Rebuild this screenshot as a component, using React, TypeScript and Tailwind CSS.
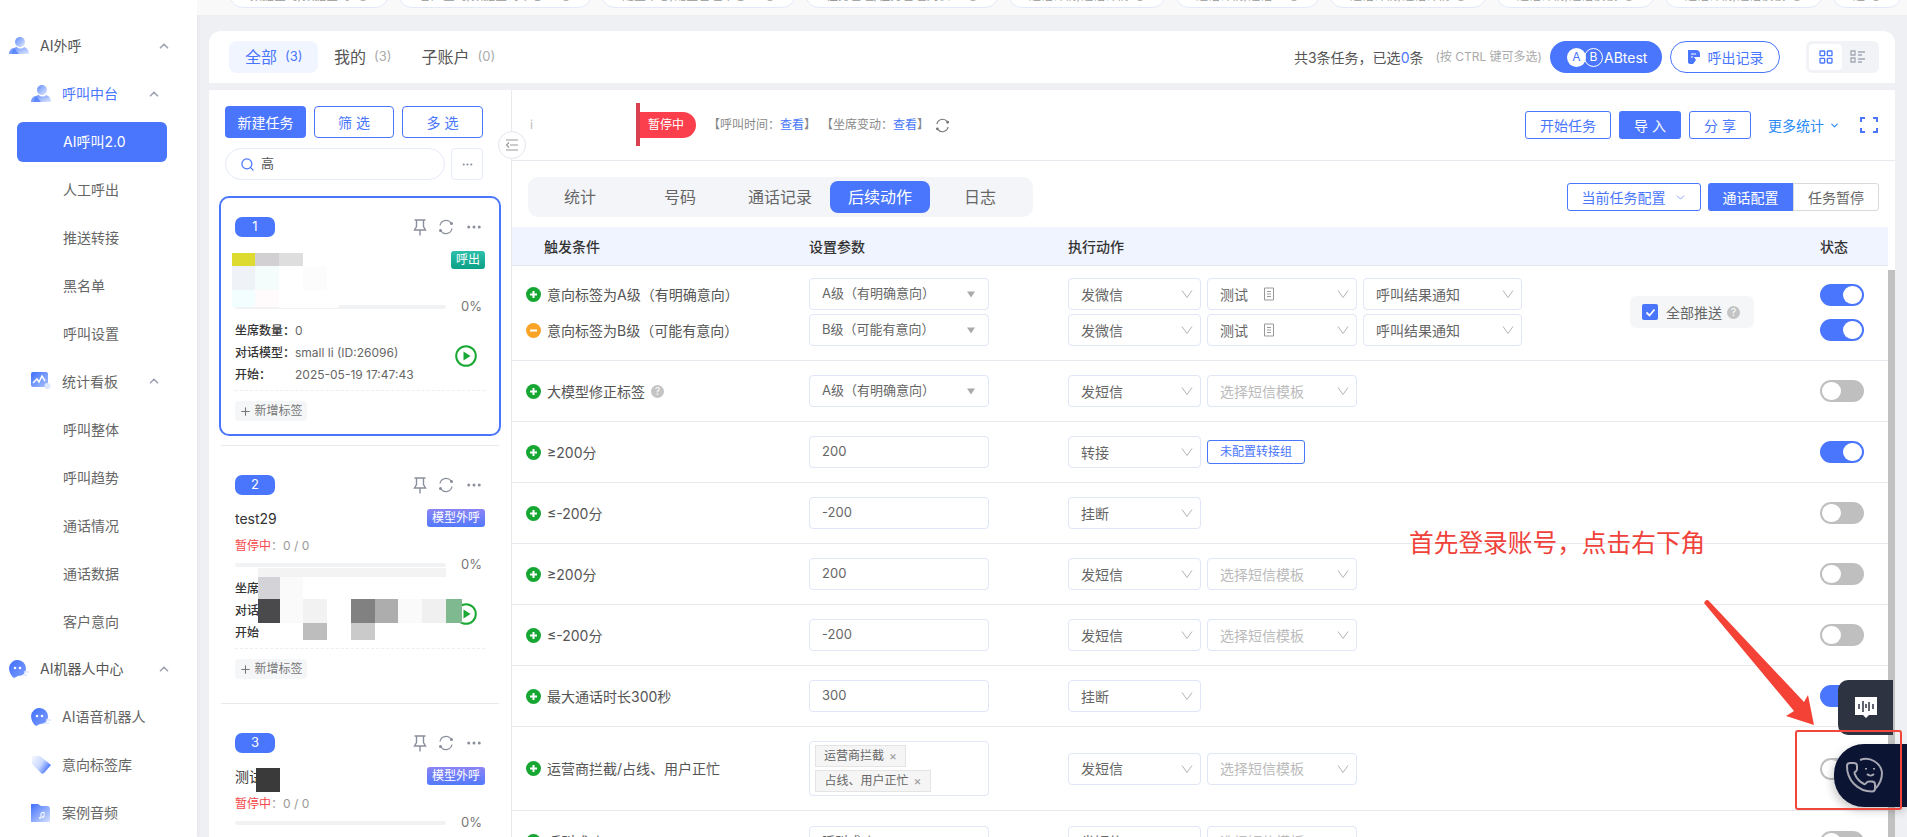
import React from 'react';
import { ChevronDown, ChevronUp, Ellipsis, LayoutGrid, Plus, Search } from 'lucide-react';

const PILLS = [
  { w: 'w-[160px]', text: '数据查询/数据查询' },
  { w: 'w-[194px]', text: '客户查询/数据查询中心' },
  { w: 'w-[195px]', text: '配置中心/配置管理中心' },
  { w: 'w-[194px]', text: '任务管理/任务管理列表' },
  { w: 'w-[158px]', text: '通话详情/通话详情' },
  { w: 'w-[145px]', text: '通话详情/通话记录' },
  { w: 'w-[158px]', text: '通话详情/通话详情' },
  { w: 'w-[159px]', text: '通话详情/通话模板' },
  { w: 'w-[159px]', text: '通话详情/通话模板' },
  { w: 'w-[70px]', text: '通话详情' },
];

const PeopleIcon = ({ id }: { id: string }) => (
  <svg width="20" height="18" viewBox="0 0 20 18" className="shrink-0">
    <defs>
      <linearGradient id={id} x1="0" y1="0" x2="1" y2="1">
        <stop offset="0" stopColor="#5f8afc" />
        <stop offset="1" stopColor="#e2eafe" />
      </linearGradient>
    </defs>
    <circle cx="11" cy="5" r="5" fill={`url(#${id})`} />
    <path d="M3 17c0-4 2-7 5-7 1 2 6 2 7 0 3 1 5 3 5 7z" fill={`url(#${id})`} />
    <path d="M0 17c0-3 2-6 5-6l5 6z" fill="#4b7bfb" opacity=".75" />
  </svg>
);

const ChartIcon = () => (
  <svg width="20" height="18" viewBox="0 0 20 18" className="shrink-0">
    <defs>
      <linearGradient id="chartg" x1="0" y1="0" x2="1" y2="1">
        <stop offset="0" stopColor="#3f6ffb" />
        <stop offset="1" stopColor="#a9c2fd" />
      </linearGradient>
    </defs>
    <rect width="17" height="15" rx="2" fill="url(#chartg)" />
    <path d="M2 11l4-4 2 3 3-6 3 5" fill="none" stroke="#fff" strokeWidth="1.5" />
    <circle cx="16.5" cy="14" r="3" fill="#dbe6ff" />
  </svg>
);

const BotIcon = ({ id }: { id: string }) => (
  <svg width="20" height="18" viewBox="0 0 20 18" className="shrink-0">
    <defs>
      <linearGradient id={id} x1="0" y1="0" x2="1" y2="1">
        <stop offset="0" stopColor="#3f6ffb" />
        <stop offset="1" stopColor="#7f9ffd" />
      </linearGradient>
    </defs>
    <path d="M9 0a8.500 8.500 0 0 1 8 8c0 5-3 8-8 8l-4 2c-3-2-5-6-5-10a8.500 8.500 0 0 1 9-8z" fill={`url(#${id})`} />
    <circle cx="6" cy="8" r="1.300" fill="#fff" />
    <circle cx="11" cy="8" r="1.300" fill="#fff" />
    <path d="M15 12h5M14 15h4" stroke="#dbe6ff" strokeWidth="1.500" />
  </svg>
);

const TagIcon = () => (
  <svg width="20" height="18" viewBox="0 0 20 18" className="shrink-0">
    <defs>
      <linearGradient id="tagg" x1="0" y1="0" x2="1" y2="0.6">
        <stop offset="0" stopColor="#f6f8ff" />
        <stop offset="0.55" stopColor="#c9d8fe" />
        <stop offset="1" stopColor="#3f6ffb" />
      </linearGradient>
    </defs>
    <path d="M1 2c0-1 1-2 2-2h6l11 9-7 8c-1 1-2 1-3 0L1 8z" fill="url(#tagg)" />
  </svg>
);

const FolderIcon = () => (
  <svg width="20" height="18" viewBox="0 0 20 18" className="shrink-0">
    <defs>
      <linearGradient id="folderg" x1="0" y1="0" x2="1" y2="1">
        <stop offset="0" stopColor="#3f6ffb" />
        <stop offset="1" stopColor="#d5e1fd" />
      </linearGradient>
    </defs>
    <path d="M0 0h7l3 2h6c2 0 3 1 3 3v13H0z" fill="url(#folderg)" />
    <path d="M10 9v5M10 9l3-1v5" stroke="#fff" strokeWidth="1" fill="none" />
    <circle cx="9" cy="14" r="1" fill="#fff" />
    <circle cx="12" cy="13" r="1" fill="#fff" />
  </svg>
);

const SyncIcon = ({ size, className }: { size: number; className?: string }) => (
  <svg width={size} height={size} viewBox="0 0 16 16" fill="none" stroke="currentColor" strokeWidth="1.200" className={className}>
    <path d="M2 6.500A6.200 6.200 0 0 1 13 3.800" />
    <path d="M14 9.500A6.200 6.200 0 0 1 3 12.200" />
    <circle cx="13.500" cy="4.500" r=".9" fill="currentColor" />
    <circle cx="2.500" cy="11.500" r=".9" fill="currentColor" />
  </svg>
);

const PinIcon = () => (
  <svg width="14" height="17" viewBox="0 0 14 17" fill="none" stroke="currentColor" strokeWidth="1.400">
    <path d="M1.500 1h11M3.500 1v6.500L1.500 11h11l-2-3.500V1M7 11v5.500" />
  </svg>
);

const Sidebar = () => {
  const Sub = ({ text }: { text: string }) => (
    <div className="flex h-12 items-center pl-[63px] text-[14px] text-[#666]">{text}</div>
  );
  const Up = ({ pr }: { pr: string }) => (
    <ChevronUp size={14} strokeWidth={3} className={`ml-auto text-[#a2a6b4] ${pr}`} />
  );
  return (
    <aside className="flex h-full w-[197px] shrink-0 flex-col overflow-hidden bg-white pt-[22px] shadow-[2px_0_4px_rgba(0,0,0,0.03)]">
      <div className="flex h-12 items-center gap-[11px] pl-[9px] text-[14px] text-[#555]">
        <PeopleIcon id="p1" />
        AI外呼
        <Up pr="mr-[26px]" />
      </div>
      <div className="flex h-12 items-center gap-[11px] pl-[31px] text-[14px] text-[#4a76fd]">
        <PeopleIcon id="p2" />
        呼叫中台
        <Up pr="mr-[36px]" />
      </div>
      <div className="flex h-12 items-center px-[17px]">
        <div className="flex h-10 w-[150px] items-center rounded-md bg-[#4a76fd] pl-[46px] text-[14px] text-white">
          AI呼叫2.0
        </div>
      </div>
      <Sub text="人工呼出" />
      <Sub text="推送转接" />
      <Sub text="黑名单" />
      <Sub text="呼叫设置" />
      <div className="flex h-12 items-center gap-[11px] pl-[31px] text-[14px] text-[#666]">
        <ChartIcon />
        统计看板
        <Up pr="mr-[36px]" />
      </div>
      <Sub text="呼叫整体" />
      <Sub text="呼叫趋势" />
      <Sub text="通话情况" />
      <Sub text="通话数据" />
      <Sub text="客户意向" />
      <div className="flex h-12 items-center gap-[11px] pl-[9px] text-[14px] text-[#555]">
        <BotIcon id="b1" />
        AI机器人中心
        <Up pr="mr-[26px]" />
      </div>
      <div className="flex h-12 shrink-0 items-center gap-[11px] pl-[31px] text-[14px] text-[#666]">
        <BotIcon id="b2" />
        AI语音机器人
      </div>
      <div className="flex h-12 shrink-0 items-center gap-[11px] pl-[31px] text-[14px] text-[#666]">
        <TagIcon />
        意向标签库
      </div>
      <div className="flex h-12 shrink-0 items-center gap-[11px] pl-[31px] text-[14px] text-[#666]">
        <FolderIcon />
        案例音频
      </div>
    </aside>
  );
};

const PlayIcon = () => (
  <svg width="22" height="22" viewBox="0 0 22 22" className="absolute left-[234px] top-[147px]">
    <circle cx="11" cy="11" r="9.800" fill="#fff" stroke="#1aa834" strokeWidth="2" />
    <path d="M8.500 6.500v9l7-4.500z" fill="#1aa834" />
  </svg>
);

interface CardProps {
  index: number;
  name?: React.ReactNode;
  tag: 'out' | 'model';
  paused?: boolean;
  info?: [string, string][];
  active?: boolean;
  children?: React.ReactNode;
}

const TaskCard = ({ index, name, tag, paused, info, active, children }: CardProps) => (
  <div
    className={`relative h-[240px] shrink-0 rounded-[10px] border-2 px-[14px] pt-[19px] ${
      active ? 'border-[#4a76fd]' : 'border-transparent'
    }`}
  >
    <div className="flex h-5 items-center">
      <div className="flex h-5 w-10 items-center justify-center rounded-[7px] bg-[#4a76fd] text-[13px] text-white">
        {index}
      </div>
      <div className="ml-auto flex items-center gap-[11px] pr-[2px] text-[#8a8f9c]">
        <PinIcon />
        <SyncIcon size={16} />
        <Ellipsis size={18} strokeWidth={2} />
      </div>
    </div>
    <div className="mt-[14px] flex h-[18px] items-center justify-between">
      <span className="text-[14px] text-[#333]">{name}</span>
      {tag === 'out' ? (
        <span className="flex h-[18px] w-[34px] items-center justify-center rounded-[3px] bg-gradient-to-b from-[#2cc0ab] to-[#08a088] text-[12px] text-white">
          呼出
        </span>
      ) : (
        <span className="flex h-[18px] w-[58px] items-center justify-center rounded-[3px] bg-gradient-to-b from-[#8a84f5] to-[#5179fb] text-[12px] text-white">
          模型外呼
        </span>
      )}
    </div>
    <div className="mt-[9px] flex h-5 items-center text-[12px]">
      {paused && (
        <>
          <span className="text-[#f5484a]">暂停中</span>
          <span className="text-[#999]">：0 / 0</span>
        </>
      )}
    </div>
    <div className="mt-px flex h-4 items-center">
      <div className="h-1 w-[211px] rounded-sm bg-[#f1f2f4]" />
      <span className="ml-[15px] text-[13px] text-[#777]">0%</span>
    </div>
    <div className="mt-[5px] flex h-[66px] flex-col">
      {info?.map(([label, value]) => (
        <div key={label} className="flex h-[22px] items-center text-[12px]">
          <span className="w-[60px] shrink-0 font-medium text-[#333]">{label}</span>
          <span className="text-[#666]">{value}</span>
        </div>
      ))}
    </div>
    <div className="mt-[4px] border-t border-dashed border-[#eceef2]" />
    <div className="mt-[10px] flex h-5 w-[72px] items-center justify-center gap-[2px] rounded bg-[#f5f6f8] text-[12px] text-[#777]">
      <Plus size={13} />
      新增标签
    </div>
    <PlayIcon />
    {children}
  </div>
);

const TaskList = () => (
  <div className="flex h-full w-[303px] shrink-0 flex-col overflow-hidden border-r border-[#e9eaee] pt-4">
    <div className="ml-4 flex w-[258px] gap-2 text-[14px]">
      <button className="h-8 w-[81px] rounded bg-[#4a76fd] text-white">新建任务</button>
      <button className="h-8 w-[80px] rounded border border-[#4a76fd] text-[#4a76fd]">筛 选</button>
      <button className="h-8 w-[81px] rounded border border-[#4a76fd] text-[#4a76fd]">多 选</button>
    </div>
    <div className="ml-4 mt-[10px] flex w-[258px] gap-[6px]">
      <div className="flex h-8 w-[220px] items-center gap-[6px] rounded-full border border-[#e6ebf8] pl-[14px] text-[13px] text-[#555]">
        <Search size={15} strokeWidth={2} className="text-[#4a76fd]" />高
      </div>
      <div className="flex h-8 w-8 items-center justify-center rounded border border-[#e6ebf8] text-[#8a8f9c]">
        <Ellipsis size={13} />
      </div>
    </div>
    <div className="mx-[10px] mt-4 flex w-[282px] flex-col">
      <TaskCard
        index={1}
        tag="out"
        active
        info={[
          ['坐席数量：', '0'],
          ['对话模型：', 'small li (ID:26096)'],
          ['开始：', '2025-05-19 17:47:43'],
        ]}
      >
        <div className="absolute left-[11px] top-[55px] h-[13px] w-[23px] bg-[#dddb30]" />
        <div className="absolute left-[34px] top-[55px] h-[13px] w-[24px] bg-[#d2d0d2]" />
        <div className="absolute left-[58px] top-[55px] h-[13px] w-[24px] bg-[#dedede]" />
        <div className="absolute left-[11px] top-[68px] h-[24px] w-[23px] bg-[#eff2f7]" />
        <div className="absolute left-[34px] top-[68px] h-[24px] w-[24px] bg-[#f5fdfc]" />
        <div className="absolute left-[82px] top-[68px] h-[24px] w-[24px] bg-[#fcfcfc]" />
        <div className="absolute left-[11px] top-[92px] h-[17px] w-[23px] bg-[#f2feff]" />
        <div className="absolute left-[34px] top-[92px] h-[17px] w-[24px] bg-[#fffafb]" />
        <div className="absolute left-[58px] top-[104px] h-[6px] w-[60px] bg-white" />
      </TaskCard>
      <div className="mx-[2px] mb-2 mt-[9px] border-t border-[#e9eaee]" />
      <TaskCard index={2} tag="model" name="test29" paused info={[['坐席', ''], ['对话', ''], ['开始', '']]}>
        <div className="absolute left-[37px] top-[112px] h-[9px] w-[188px] bg-[#f3f3f3]" />
        <div className="absolute left-[37px] top-[121px] h-[22px] w-[22px] bg-[#d4d4d8]" />
        <div className="absolute left-[59px] top-[121px] h-[22px] w-[23px] bg-[#fafafa]" />
        <div className="absolute left-[37px] top-[143px] h-[24px] w-[22px] bg-[#4a4a4c]" />
        <div className="absolute left-[59px] top-[143px] h-[24px] w-[23px] bg-[#fafafa]" />
        <div className="absolute left-[82px] top-[143px] h-[24px] w-[24px] bg-[#f2f2f2]" />
        <div className="absolute left-[130px] top-[143px] h-[24px] w-[24px] bg-[#818181]" />
        <div className="absolute left-[154px] top-[143px] h-[24px] w-[23px] bg-[#adadad]" />
        <div className="absolute left-[177px] top-[143px] h-[24px] w-[24px] bg-[#fafafa]" />
        <div className="absolute left-[201px] top-[143px] h-[24px] w-[24px] bg-[#f0f0f0]" />
        <div className="absolute left-[225px] top-[143px] h-[24px] w-[16px] bg-[#7fb98f]" />
        <div className="absolute left-[82px] top-[167px] h-[17px] w-[24px] bg-[#bdbdbd]" />
        <div className="absolute left-[130px] top-[167px] h-[17px] w-[24px] bg-[#cacaca]" />
      </TaskCard>
      <div className="mx-[2px] mb-2 mt-[9px] border-t border-[#e9eaee]" />
      <TaskCard index={3} tag="model" name="测试" paused>
        <div className="absolute left-[35px] top-[54px] h-[24px] w-[24px] bg-[#3a3a3a]" />
      </TaskCard>
    </div>
  </div>
);

const Caret = () => (
  <svg width="10" height="10" viewBox="0 0 10 10" className="shrink-0">
    <path d="M1 2.500h8l-4 6z" fill="#aaa" />
  </svg>
);

const Vee = () => (
  <svg width="12" height="10" viewBox="0 0 12 10" className="ml-auto shrink-0">
    <path d="M1 1.500l5 7 5-7" fill="none" stroke="#b4b4b4" strokeWidth="1" />
  </svg>
);

const Select = ({ text, w, muted, doc }: { text: string; w: string; muted?: boolean; doc?: boolean }) => (
  <div
    className={`flex h-8 ${w} shrink-0 items-center rounded border border-[#e0e6f8] pl-3 pr-[7px] text-[14px] ${
      muted ? 'text-[#bbb]' : 'text-[#666]'
    }`}
  >
    {text}
    {doc && (
      <svg width="14" height="14" viewBox="0 0 14 14" className="ml-[14px]">
        <path d="M2.500 1h9v12h-9zM5 4.500h4M5 7h4M5 9.500h4" fill="none" stroke="#999" strokeWidth="1" />
      </svg>
    )}
    <Vee />
  </div>
);

const ParamBox = ({ text, caret }: { text: string; caret?: boolean }) => (
  <div className="flex h-8 w-[180px] shrink-0 items-center justify-between rounded border border-[#e0e6f8] pl-3 pr-3 text-[13px] text-[#666]">
    {text}
    {caret && <Caret />}
  </div>
);

const StateDot = ({ minus }: { minus?: boolean }) => (
  <svg width="15" height="15" viewBox="0 0 15 15" className="shrink-0">
    <circle cx="7.500" cy="7.500" r="7.500" fill={minus ? '#f9a425' : '#16a632'} />
    <path d={minus ? 'M4 7.500h7' : 'M4 7.500h7M7.500 4v7'} stroke="#fff" strokeWidth="2" />
  </svg>
);

const Toggle = ({ on }: { on?: boolean }) => (
  <div
    className={`flex h-[22px] w-[44px] shrink-0 items-center rounded-full px-[2px] ${
      on ? 'justify-end bg-[#4a76fd]' : 'justify-start bg-[#bfbfbf]'
    }`}
  >
    <div className="h-[18px] w-[19px] rounded-full bg-white" />
  </div>
);

const Condition = ({ text, minus, help }: { text: string; minus?: boolean; help?: boolean }) => (
  <div className="flex w-[297px] shrink-0 items-center gap-[6px] pl-[14px] text-[14px] text-[#555]">
    <StateDot minus={minus} />
    <span>{text}</span>
    {help && (
      <span className="flex h-[13px] w-[13px] items-center justify-center rounded-full bg-[#c4c4c4] text-[10px] text-white">
        ?
      </span>
    )}
  </div>
);

const RuleRow = ({
  cond,
  param,
  caret,
  action,
  tpl,
  on,
}: {
  cond: string;
  param: string;
  caret?: boolean;
  action: string;
  tpl?: boolean;
  on?: boolean;
}) => (
  <div className="flex h-[61px] shrink-0 items-center border-b border-[#e8e9ee] pl-0">
    <Condition text={cond} help={cond === '大模型修正标签'} />
    <div className="w-[259px] shrink-0">
      <ParamBox text={param} caret={caret} />
    </div>
    <div className="flex w-[752px] shrink-0 items-center gap-[6px]">
      <Select text={action} w="w-[133px]" />
      {tpl && <Select text="选择短信模板" w="w-[150px]" muted />}
      {action === '转接' && (
        <div className="flex h-6 w-[98px] items-center justify-center rounded-[3px] border border-[#4a76fd] text-[12px] text-[#4a76fd]">
          未配置转接组
        </div>
      )}
    </div>
    <Toggle on={on} />
  </div>
);

const RuleTable = () => (
  <div className="flex min-h-0 flex-1">
    <div className="flex w-[1376px] shrink-0 flex-col overflow-hidden">
      <div className="flex h-[39px] shrink-0 items-center border-b border-[#e4e6ee] bg-[#f0f4fe] text-[14px] font-medium text-[#333]">
        <span className="w-[297px] pl-[32px]">触发条件</span>
        <span className="w-[259px]">设置参数</span>
        <span className="w-[752px]">执行动作</span>
        <span>状态</span>
      </div>
      <div className="flex h-[95px] shrink-0 items-start border-b border-[#e8e9ee] pt-[12px]">
        <div className="flex w-[1118px] flex-col gap-1">
          <div className="flex items-center">
            <Condition text="意向标签为A级（有明确意向）" />
            <div className="w-[259px] shrink-0">
              <ParamBox text="A级（有明确意向）" caret />
            </div>
            <div className="flex gap-[6px]">
              <Select text="发微信" w="w-[133px]" />
              <Select text="测试" w="w-[150px]" doc />
              <Select text="呼叫结果通知" w="w-[159px]" />
            </div>
          </div>
          <div className="flex items-center">
            <Condition text="意向标签为B级（可能有意向）" minus />
            <div className="w-[259px] shrink-0">
              <ParamBox text="B级（可能有意向）" caret />
            </div>
            <div className="flex gap-[6px]">
              <Select text="发微信" w="w-[133px]" />
              <Select text="测试" w="w-[150px]" doc />
              <Select text="呼叫结果通知" w="w-[159px]" />
            </div>
          </div>
        </div>
        <div className="mt-[18px] flex h-8 w-[124px] shrink-0 items-center rounded-md bg-[#f5f6f8] pl-3 text-[14px] text-[#666]">
          <span className="mr-2 flex h-4 w-4 shrink-0 items-center justify-center rounded-[2px] bg-[#4a76fd]">
            <svg width="11" height="11" viewBox="0 0 11 11">
              <path d="M1.500 5.500l3 3 5-6" fill="none" stroke="#fff" strokeWidth="1.800" />
            </svg>
          </span>
          全部推送
          <span className="ml-[5px] flex h-[13px] w-[13px] shrink-0 items-center justify-center rounded-full bg-[#c4c4c4] text-[10px] text-white">
            ?
          </span>
        </div>
        <div className="ml-[66px] mt-[6px] flex flex-col gap-[13px]">
          <Toggle on />
          <Toggle on />
        </div>
      </div>
      <RuleRow cond="大模型修正标签" param="A级（有明确意向）" caret action="发短信" tpl />
      <RuleRow cond="≥200分" param="200" action="转接" on />
      <RuleRow cond="≤-200分" param="-200" action="挂断" />
      <RuleRow cond="≥200分" param="200" action="发短信" tpl />
      <RuleRow cond="≤-200分" param="-200" action="发短信" tpl />
      <RuleRow cond="最大通话时长300秒" param="300" action="挂断" on />
      <div className="flex h-[84px] shrink-0 items-center border-b border-[#e8e9ee]">
        <Condition text="运营商拦截/占线、用户正忙" />
        <div className="w-[259px] shrink-0">
          <div className="flex h-[55px] w-[180px] flex-col gap-[3px] rounded border border-[#e0e6f8] px-[5px] pt-[3px] text-[12px] text-[#666]">
            <span className="flex h-[22px] w-[91px] items-center justify-center gap-[5px] border border-[#e4e4e4] bg-[#f5f5f5]">
              运营商拦截<span className="text-[#999]">×</span>
            </span>
            <span className="flex h-[22px] w-[116px] items-center justify-center gap-[5px] border border-[#e4e4e4] bg-[#f5f5f5]">
              占线、用户正忙<span className="text-[#999]">×</span>
            </span>
          </div>
        </div>
        <div className="flex w-[752px] shrink-0 items-center gap-[6px]">
          <Select text="发短信" w="w-[133px]" />
          <Select text="选择短信模板" w="w-[150px]" muted />
        </div>
        <Toggle />
      </div>
      <div className="flex h-[61px] shrink-0 items-center">
        <Condition text="呼叫成功" />
        <div className="w-[259px] shrink-0">
          <ParamBox text="呼叫成功" />
        </div>
        <div className="flex w-[752px] shrink-0 items-center gap-[6px]">
          <Select text="发短信" w="w-[133px]" />
          <Select text="选择短信模板" w="w-[150px]" muted />
        </div>
        <Toggle />
      </div>
    </div>
    <div className="flex w-[7px] shrink-0 flex-col pt-[43px]">
      <div className="flex-1 bg-[#c1c1c1]" />
    </div>
  </div>
);

const DetailPanel = () => (
  <div className="flex h-full min-w-0 flex-1 flex-col overflow-hidden">
    <div className="flex h-[71px] shrink-0 items-center border-b border-[#e8e9ee] pl-[18px] pr-[17px]">
      <span className="w-[106px] text-[12px] text-[#bbb]">i</span>
      <span className="relative flex h-[26px] w-[60px] items-center justify-center rounded-r-full rounded-l-[4px] bg-[#fb3f4c] text-[12px] text-white">
        <span className="absolute -top-[9px] left-0 h-[43px] w-1 bg-[#d8404f]" />
        暂停中
      </span>
      <span className="ml-[12px] flex text-[12px] text-[#888]">
        <span>
          【呼叫时间：<span className="text-[#4a76fd]">查看</span>】
        </span>
        <span className="ml-[5px]">
          【坐席变动：<span className="text-[#4a76fd]">查看</span>】
        </span>
      </span>
      <SyncIcon size={15} className="ml-[6px] text-[#777]" />
      <div className="ml-auto flex items-center text-[14px]">
        <button className="h-7 w-[86px] rounded-[3px] border border-[#4a76fd] text-[#4a76fd]">开始任务</button>
        <button className="ml-2 h-7 w-[62px] rounded-[3px] bg-[#4a76fd] text-white">导 入</button>
        <button className="ml-2 h-7 w-[62px] rounded-[3px] border border-[#4a76fd] text-[#4a76fd]">分 享</button>
        <span className="ml-[17px] flex w-[74px] items-center gap-[5px] text-[#2a8cf5]">
          更多统计
          <ChevronDown size={11} strokeWidth={2.5} />
        </span>
        <svg width="18" height="16" viewBox="0 0 18 16" fill="none" stroke="#4a76fd" strokeWidth="2" className="ml-[18px]">
          <path d="M1 5V1h4M13 1h4v4M17 11v4h-4M5 15H1v-4" />
        </svg>
      </div>
    </div>
    <div className="flex h-[66px] shrink-0 items-start pl-[16px] pr-[16px] pt-[16px]">
      <div className="flex h-10 w-[505px] items-center rounded-[10px] bg-[#f3f5f9] px-[2px] text-[16px] text-[#666]">
        <span className="w-[100px] text-center">统计</span>
        <span className="w-[100px] text-center">号码</span>
        <span className="w-[100px] text-center">通话记录</span>
        <span className="flex h-8 w-[100px] items-center justify-center rounded-lg bg-[#4a76fd] text-white">后续动作</span>
        <span className="w-[100px] text-center">日志</span>
      </div>
      <div className="ml-auto mt-[6px] flex items-center text-[14px]">
        <span className="flex h-7 w-[134px] items-center justify-center gap-2 rounded-[3px] border border-[#4a76fd] text-[#4a76fd]">
          当前任务配置
          <ChevronDown size={13} strokeWidth={1.2} />
        </span>
        <span className="ml-[7px] flex h-7 w-[85px] items-center justify-center rounded-l-[3px] bg-[#4a76fd] text-white">通话配置</span>
        <span className="flex h-7 w-[86px] items-center justify-center rounded-r-[3px] border border-[#d9d9d9] text-[#666]">任务暂停</span>
      </div>
    </div>
    <RuleTable />
  </div>
);

const HeaderBar = () => (
  <div className="flex h-[52px] shrink-0 items-center rounded-t-xl bg-white pl-[20px] pr-4">
    <div className="flex h-8 w-[89px] items-center rounded-lg bg-[#f0f5ff] pl-4 text-[16px] text-[#4a76fd]">
      全部<span className="ml-2 text-[13px]">(3)</span>
    </div>
    <div className="flex h-8 items-center pl-4 pr-[14px] text-[16px] text-[#555]">
      我的<span className="ml-2 text-[13px] text-[#aaa]">(3)</span>
    </div>
    <div className="flex h-8 items-center pl-4 text-[16px] text-[#555]">
      子账户<span className="ml-2 text-[13px] text-[#aaa]">(0)</span>
    </div>
    <div className="ml-auto flex items-center">
      <span className="text-[14px] text-[#555]">
        共3条任务，已选<span className="text-[#4a76fd]">0</span>条
      </span>
      <span className="ml-[12px] text-[12px] text-[#aaa]">(按 CTRL 键可多选)</span>
      <span className="ml-2 flex h-8 w-[112px] items-center rounded-full bg-[#4a76fd] pl-[17px] text-[14px] text-white">
        <span className="flex h-[19px] w-[19px] items-center justify-center rounded-full bg-white text-[12px] text-[#4a76fd]">A</span>
        <span className="-ml-[2px] mr-px flex h-[19px] w-[19px] items-center justify-center rounded-full border border-white text-[12px]">B</span>
        ABtest
      </span>
      <span className="ml-2 flex h-8 w-[110px] items-center justify-center gap-[7px] rounded-full border border-[#4a76fd] text-[14px] text-[#4a76fd]">
        <svg width="14" height="16" viewBox="0 0 14 16">
          <path d="M1 1h8c3 0 4 2 4 4v3H7l2 3-3 4H3c-1 0-2-1-2-2z" fill="#4a76fd" />
          <path d="M4 5h5M4 8h2" stroke="#fff" strokeWidth="1.200" />
        </svg>
        呼出记录
      </span>
      <div className="ml-[26px] flex h-8 w-[73px] items-center rounded-md bg-[#f2f3f7] pl-[3px]">
        <span className="flex h-[26px] w-[33px] items-center justify-center rounded bg-white">
          <LayoutGrid size={16} strokeWidth={2} className="text-[#4a76fd]" />
        </span>
        <svg width="16" height="14" viewBox="0 0 16 14" className="ml-2">
          <path d="M1 1h4v4H1zM1 8h4v4H1zM8 2h7M8 5h4M8 9h7M8 12h4" fill="none" stroke="#a4a8b4" strokeWidth="1.300" />
        </svg>
      </div>
    </div>
  </div>
);

export default function App() {
  return (
    <div className="relative flex h-[837px] w-[1907px] overflow-hidden bg-[#eef0f4] font-['Inter','Noto_Sans_CJK_SC',sans-serif]">
      <Sidebar />
      <div className="flex min-w-0 flex-1 flex-col">
        <div className="flex h-[15px] shrink-0 gap-[9px] overflow-hidden bg-[#f9f9fa] pl-[32px] pr-[28px]">
          {PILLS.map((p, i) => (
            <div
              key={i}
              className={`-mt-[20px] flex h-[28px] ${p.w} shrink-0 items-center justify-between rounded-full border border-[#e4e9fa] bg-white px-[20px] pt-[3px] text-[12px] text-[#999]`}
            >
              <span className="truncate">{p.text}</span>
              <span className="h-[10px] w-[10px] shrink-0 rounded-full bg-[#aaa]" />
            </div>
          ))}
        </div>
        <div className="mx-[12px] mt-4 flex min-h-0 flex-1 flex-col">
          <HeaderBar />
          <div className="h-[7px] shrink-0" />
          <div className="relative flex min-h-0 flex-1 bg-white">
            <TaskList />
            <DetailPanel />
            <span className="absolute left-[289px] top-[41px] flex h-7 w-7 items-center justify-center rounded-full border border-[#e4e6ee] bg-white">
              <svg width="14" height="12" viewBox="0 0 14 12">
                <path d="M1 1h12M5 6h8M1 11h12M4 3.500L1.500 6 4 8.500" fill="none" stroke="#999" strokeWidth="1.200" />
              </svg>
            </span>
          </div>
        </div>
      </div>

      <span className="absolute left-[1409px] top-[528px] whitespace-nowrap text-[24.7px] leading-[30px] text-[#f0423a]">
        首先登录账号，点击右下角
      </span>
      <svg width="120" height="135" viewBox="0 0 120 135" className="absolute left-[1700px] top-[595px]">
        <path d="M5 6.500c1-2 3-2 4-.5L104 107l4-7 6 30-28-9 8-5L4 8z" fill="#f44336" />
      </svg>
      <div className="absolute left-[1838px] top-[680px] flex h-[55px] w-[55px] items-center justify-center rounded-l-[10px] bg-[#2d3340]">
        <svg width="24" height="22" viewBox="0 0 24 22">
          <path d="M1 0h22v18h-8l-3 3-3-3H1z" fill="#fff" />
          <path d="M5 7v5M9 4v11M12 7v4M15 5v9M19 7v5" stroke="#2d3340" strokeWidth="1.500" />
        </svg>
      </div>
      <div className="absolute left-[1834px] top-[744px] flex h-[63px] w-[73px] items-center rounded-l-[30px] bg-[#0c1434] pl-[11px] shadow-[-2px_4px_8px_rgba(0,0,0,0.2)]">
        <svg width="38" height="38" viewBox="0 0 38 38" fill="none" stroke="#a7a8b2" strokeWidth="2">
          <path d="M19 27a1.500 1.500 0 0 0 1.800-.5l.7-.8A3 3 0 0 1 24 24.500h3a3 3 0 0 1 3 3v4a3 3 0 0 1-3 3A25 25 0 0 1 2 9a3 3 0 0 1 3-3h4a3 3 0 0 1 3 3v3a3 3 0 0 1-1.200 2.400l-.7.500a1.500 1.500 0 0 0-.4 1.900 20 20 0 0 0 9.300 10.200" />
          <path d="M15 3c10-4 21 3 22 13 0 7-3 12-7 16" />
          <path d="M21 11v1.500M29 11v1.500M22 17c2 2 5 2 7 0" />
        </svg>
      </div>
      <div className="absolute left-[1795px] top-[730px] h-[80px] w-[107px] rounded-[3px] border-2 border-[#f0463c]" />
    </div>
  );
}
